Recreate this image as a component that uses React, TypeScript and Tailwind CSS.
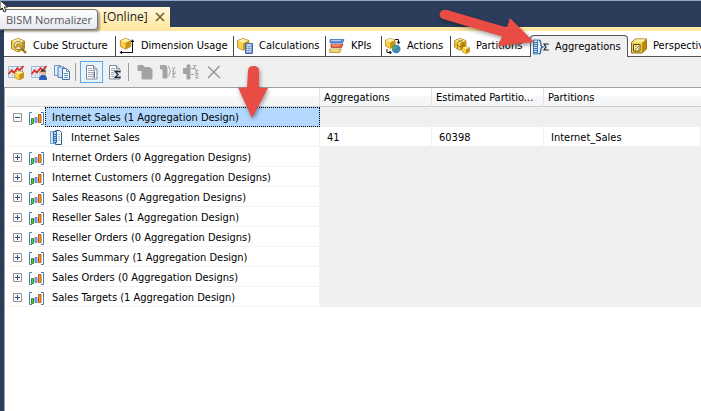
import { ReactNode } from "react";
import clsx from "clsx";

const svgProps = { width: 16, height: 16, viewBox: "0 0 16 16", className: "shrink-0", "aria-hidden": true };

function CubeShape({ x = 0, y = 0, s = 1 }: { x?: number; y?: number; s?: number }) {
  return (
    <g transform={`translate(${x} ${y}) scale(${s})`}>
      <path d="M7 0.5 13.5 3v7.5L7 14 0.5 10.5V3z" fill="#e9b41c" stroke="#8e6a10" strokeWidth="0.8" />
      <path d="M7 0.8 13 3 7 6 1 3z" fill="#fdf0a0" />
      <path d="M1 3.3 7 6v7.5L1 10.3z" fill="#f8d24c" />
      <path d="M13 3.3 7 6v7.5l6-3.2z" fill="#c9930f" />
    </g>
  );
}

function StructureIcon() {
  return (
    <svg {...svgProps}>
      <CubeShape />
      <path d="M10.5 10.5 15 15" stroke="#9b6a10" strokeWidth="2.2" />
      <circle cx="7.3" cy="7.5" r="4.2" fill="#f3ecc8" fillOpacity="0.85" stroke="#8a7a48" />
      <path d="M4.500 9.800 5.500 6.500l2-1.300 2.300 1.500.3 3-2.500-1.700z" fill="#d9a91c" stroke="#8a6508" strokeWidth="0.600" />
    </svg>
  );
}

function DimensionIcon() {
  return (
    <svg {...svgProps}>
      <CubeShape x={1} y={0} s={0.8} />
      <path d="M1 14.5h13M13.5 3v11.5" stroke="#111" fill="none" />
      <path d="M3 12.5.5 14.5 3 16.2zM11.5 4l2-2.7 2 2.7z" fill="#111" />
    </svg>
  );
}

function CalculationsIcon() {
  return (
    <svg {...svgProps}>
      <CubeShape s={0.88} />
      <path d="M8.500 5.500h7v10h-7z" fill="#7d9fd8" stroke="#466aa8" />
      <path d="M10 7h4" stroke="#e4eefc" strokeWidth="1.4" />
      <path d="M10 9.5h4M10 11.5h4M10 13.5h4" stroke="#f3f7ff" strokeDasharray="1 0.6" />
    </svg>
  );
}

function KpiIcon() {
  return (
    <svg {...svgProps}>
      <path d="M1 1.5h14l-1.5 3.5H1z" fill="#5f8fe0" stroke="#3a63ae" strokeWidth="0.7" />
      <path d="M2 6.2h12l-1.5 3.3H2z" fill="#e8603c" stroke="#a63a1e" strokeWidth="0.7" />
      <path d="M0.8 11h11.5l-1.4 3.4H0.8z" fill="#f6d360" stroke="#a8821e" strokeWidth="0.7" />
      <path d="M2 2.5h10M3 7.2h8M2 12h7" stroke="#fff" strokeOpacity="0.55" />
    </svg>
  );
}

function ActionsIcon() {
  return (
    <svg {...svgProps}>
      <CubeShape x={0} y={0} s={0.75} />
      <circle cx="11.2" cy="11" r="4.3" fill="#3c7fcf" />
      <path d="M9 8.5c2-1.4 4 0 3.2 1.6-1 1.4-3.4.6-3 2.9-2.4-1-2.2-3.3-.2-4.500zM13 11.500l2 .5-1.500 2.500z" fill="#57b04a" />
      <path d="M10 1.500h3.500V4M2 11v3.500h3" stroke="#111" fill="none" />
      <path d="M11.500 3.800h4l-2 2.400zM4.500 12.500v4L7 14.500z" fill="#111" />
    </svg>
  );
}

function PartitionsIcon() {
  return (
    <svg {...svgProps}>
      <CubeShape s={0.88} />
      <path d="M3.500 1.800 9 4.500v7M9 1.800 3.500 4.500v7M.8 6.300 6.200 9l5.400-2.700" stroke="#8e6a10" strokeWidth="0.7" fill="none" />
      <CubeShape x={8} y={8} s={0.56} />
    </svg>
  );
}

function AggregationsIcon() {
  return (
    <svg {...svgProps}>
      <path d="M0.500 1h4v14h-4z" fill="#d5e8fa" stroke="#3b76b8" />
      <path d="M1 3.500h3M1 5.500h3M1 7.500h3M1 9.500h3M1 11.500h3M1 13.500h3" stroke="#3b76b8" />
      <path d="M5.500 1c2 0 2.200 1 2.200 3s0 3.500 1.800 4c-1.800.5-1.800 2-1.800 4s-.2 3-2.200 3" stroke="#2f6aac" strokeWidth="1.300" fill="none" />
      <path d="M15 5.800V5h-4l2 3-2 3h4v-.8" stroke="#222" strokeWidth="1.200" fill="none" />
    </svg>
  );
}

function PerspectivesIcon() {
  return (
    <svg {...svgProps}>
      <path d="M.5 4.500 4.500 1h11v10l-4.500 4H.5z" fill="#f5cf43" stroke="#7a5a08" strokeWidth="0.900" />
      <path d="M11 4.500 15.500 1v10L11 15z" fill="#bf890d" />
      <path d="M1 4.500 5 1.300h10L11 4.500z" fill="#fcee9c" />
      <path d="M2.500 6.500h6.500v6.500H2.500z" fill="#fff6c4" stroke="#5f4a10" />
      <path d="M3.500 12 8 8M4 8h1.500M7 11h1" stroke="#8c6a14" />
    </svg>
  );
}

function TrendIcon({ user }: { user?: boolean }) {
  return (
    <svg {...svgProps}>
      <path d="M.5 2.500h14v11H.5z" fill="#e9f1fb" stroke="#9fb7d4" />
      <path d="M1 5.500h13M1 8.500h13M1 11h13M4.500 3v10M8.500 3v10M12 3v10" stroke="#b7cbe4" strokeWidth="0.700" />
      <path d="M.5 10 3.500 6.500 6 8.500 9.500 4l2 2.500L15.500 2" stroke="#e0291f" strokeWidth="1.700" fill="none" />
      {user ? (
        <>
          <path d="M8 16c0-3 1-5 4-5s4 2 4 5z" fill="#2b5fb4" />
          <circle cx="12" cy="8.500" r="2.500" fill="#e8b98c" />
          <path d="M9.300 8.500c0-4 5.400-4 5.400 0-1-1.500-4-1.500-5.400 0z" fill="#3a2a1c" />
        </>
      ) : (
        <CubeShape x={6.500} y={6.500} s={0.680} />
      )}
    </svg>
  );
}

function CopyPagesIcon() {
  return (
    <svg {...svgProps}>
      <path d="M.5 1.500h6v10h-6z" fill="#e4effb" stroke="#6f95c0" />
      <path d="M4 3h6v10.500H4z" fill="#d3e5f8" stroke="#4f7fb6" />
      <path d="M8.500 4.500h4l3 3v8h-7z" fill="#f4f9ff" stroke="#3d6ea8" />
      <path d="M12.500 4.500v3h3M10 9.500h4M10 11.500h4M10 13.500h4" stroke="#6f95c0" fill="none" />
    </svg>
  );
}

function PageIcon({ sigma }: { sigma?: boolean }) {
  return (
    <svg {...svgProps}>
      <path d="M2.500 1.500h7l3.500 3.500v10H2.500z" fill="#fff" stroke="#7b8794" />
      <path d="M9.500 1.500V5H13" stroke="#7b8794" fill="#dfe6ee" />
      <path d="M4 4.500h4M4 6.500h7M4 8.500h5M4 10.500h5M4 12.500h5" stroke="#9aa5b1" />
      {sigma ? (
        <>
          <path d="M7 6.500h7v8H7z" fill="#dbe3ee" />
          <path d="M13 8.500v-1H8.200L11 10.500 8.200 13.500H13v-1" stroke="#1b2433" strokeWidth="1.300" fill="none" />
        </>
      ) : (
        <path d="M9.500 7.500h1.500V14H9.500z" fill="#5d738f" />
      )}
    </svg>
  );
}

function DisabledIcon({ kind }: { kind: "new" | "assign" | "merge" | "delete" }) {
  return (
    <svg {...svgProps} stroke="#a3a3a3" fill="none">
      {kind === "new" && <path d="M1 1.500h5l1 2h6l2 2V15H5V6.500H1z" fill="#a3a3a3" />}
      {kind === "assign" && (
        <>
          <path d="M.5 1.500H6l1 3V14H3V5H.5z" fill="#a3a3a3" />
          <path d="M8 2c1.500 0 1.500 4 2.500 5-1 1-1 5-2.500 5M15.500 4h-3l1.300 2-1.300 2h3M15.500 9.500h-3l1.300 1.500-1.300 2h3" />
        </>
      )}
      {kind === "merge" && (
        <>
          <path d="M4 1h3v14H4zM.5 4.500H4v5H.5z" fill="#a3a3a3" />
          <path d="M8 4.500h3M8 10.500h3M13.500 1.500h-3l1.300 1.500-1.300 2h3M15.500 6.500h-3l1.300 1.500-1.300 1.500h3M15.500 11h-3l1.300 1.500L12.500 14h3" />
        </>
      )}
      {kind === "delete" && <path d="M2 2.500 14 14M13.500 2 2 14" strokeWidth="1.600" stroke="#999" />}
    </svg>
  );
}

function MeasureGroupIcon() {
  return (
    <svg {...svgProps}>
      <path d="M3 3.500H.5v12H3M12 3.500h2.500v12H12" stroke="#4a7db5" fill="none" />
      <path d="M2.500 9.500h2v5h-2z" fill="#4fd04a" stroke="#1f9a24" />
      <path d="M6 8.500h2v5H6z" fill="#a9a5f0" stroke="#7b78cf" />
      <path d="M9.500 5.500H12v8H9.500z" fill="#f0962c" stroke="#b4600f" />
    </svg>
  );
}

function DesignIcon() {
  return (
    <svg width="12" height="16" viewBox="0 0 12 16" className="shrink-0" aria-hidden>
      <path d="M.5 2.500h6v12h-6z" fill="#cfe3f7" stroke="#7ba7d4" />
      <path d="M5.500 1.500h4l2 2v12h-6z" fill="#f5faff" stroke="#35618f" />
      <path d="M3.500 2.500h3v11h-3z" fill="#b5d4f2" stroke="#2f6cab" />
      <path d="M4 5.500h2M4 7.500h2M4 9.500h2M4 11.500h2" stroke="#2f6cab" />
      <path d="M8 5.500h2M8 7.500h2M8 9.500h2M8 11.500h2" stroke="#a9c3de" />
    </svg>
  );
}

interface DesignerTab {
  label: string;
  icon: ReactNode;
  width: string;
  active?: boolean;
}

const tabs: DesignerTab[] = [
  { label: "Cube Structure", icon: <StructureIcon />, width: "w-[108px]" },
  { label: "Dimension Usage", icon: <DimensionIcon />, width: "w-[118px]" },
  { label: "Calculations", icon: <CalculationsIcon />, width: "w-[92px]" },
  { label: "KPIs", icon: <KpiIcon />, width: "w-14" },
  { label: "Actions", icon: <ActionsIcon />, width: "w-[69px]" },
  { label: "Partitions", icon: <PartitionsIcon />, width: "w-[79px]" },
  { label: "Aggregations", icon: <AggregationsIcon />, width: "w-[98px]", active: true },
  { label: "Perspectives", icon: <PerspectivesIcon />, width: "w-[108px]" },
];

interface GridRow {
  name: string;
  child?: boolean;
  expanded?: boolean;
  selected?: boolean;
  values?: string[];
}

const rows: GridRow[] = [
  { name: "Internet Sales (1 Aggregation Design)", expanded: true, selected: true },
  { name: "Internet Sales", child: true, values: ["41", "60398", "Internet_Sales"] },
  { name: "Internet Orders (0 Aggregation Designs)" },
  { name: "Internet Customers (0 Aggregation Designs)" },
  { name: "Sales Reasons (0 Aggregation Designs)" },
  { name: "Reseller Sales (1 Aggregation Design)" },
  { name: "Reseller Orders (0 Aggregation Designs)" },
  { name: "Sales Summary (1 Aggregation Design)" },
  { name: "Sales Orders (0 Aggregation Designs)" },
  { name: "Sales Targets (1 Aggregation Design)" },
];

function TabStrip() {
  return (
    <div className="flex h-[26px] items-end overflow-hidden bg-white">
      <div className="h-full w-1 shrink-0 border-b border-[#555]" />
      {tabs.map((tab, i) => (
        <button
          key={tab.label}
          type="button"
          className={clsx(
            "flex shrink-0 items-center whitespace-nowrap",
            tab.width,
            tab.active
              ? "h-[22px] rounded-t border border-b-0 border-[#555] bg-[#f0f0f0] pl-[2px]"
              : "h-full border-b border-[#555] pt-1 pl-[3px]"
          )}
        >
          {tab.icon}
          <span className="ml-[6px] flex-1 text-left">{tab.label}</span>
          {!tab.active && i < 5 && <span className="h-5 w-px shrink-0 bg-[#444]" />}
        </button>
      ))}
      <div className="h-full flex-1 border-b border-[#555]" />
    </div>
  );
}

function ToolButton({ label, active, disabled, children }: { label: string; active?: boolean; disabled?: boolean; children: ReactNode }) {
  return (
    <button
      type="button"
      aria-label={label}
      disabled={disabled}
      className={clsx(
        "flex h-[22px] w-[23px] items-center justify-center border",
        active ? "border-[#5aa7ea] bg-[#e9f3fb]" : "border-transparent"
      )}
    >
      {children}
    </button>
  );
}

function Toolbar() {
  return (
    <div className="flex h-[30px] items-center bg-[#f0f0f0]">
      <ToolButton label="Design Aggregations"><TrendIcon /></ToolButton>
      <ToolButton label="Usage-Based Optimization"><TrendIcon user /></ToolButton>
      <ToolButton label="Assign Aggregation Design"><CopyPagesIcon /></ToolButton>
      <div className="mr-1 ml-[2px] h-[18px] w-px bg-[#999]" />
      <ToolButton label="Standard View" active><PageIcon /></ToolButton>
      <ToolButton label="Advanced View"><PageIcon sigma /></ToolButton>
      <div className="mr-1 ml-[2px] h-[18px] w-px bg-[#999]" />
      <ToolButton label="New Aggregation Design" disabled><DisabledIcon kind="new" /></ToolButton>
      <ToolButton label="New Aggregation" disabled><DisabledIcon kind="assign" /></ToolButton>
      <ToolButton label="Copy Aggregation" disabled><DisabledIcon kind="merge" /></ToolButton>
      <ToolButton label="Delete" disabled><DisabledIcon kind="delete" /></ToolButton>
    </div>
  );
}

function NameCell({ row }: { row: GridRow }) {
  if (row.child) {
    return (
      <div className="flex h-5 items-center gap-[9px] pl-[43px]">
        <DesignIcon />
        <span className="pt-[2px]">{row.name}</span>
      </div>
    );
  }
  return (
    <div className="flex h-5 items-center">
      <button
        type="button"
        aria-label={row.expanded ? "Collapse" : "Expand"}
        className="mr-[7px] ml-[6px] flex h-[9px] w-[9px] shrink-0 items-center justify-center"
      >
        <svg width="9" height="9" viewBox="0 0 9 9" aria-hidden>
          <path d="M.5.5h8v8h-8z" fill="#fcfcfc" stroke="#929292" />
          <path d={row.expanded ? "M2 4.500h5" : "M2 4.500h5M4.500 2v5"} stroke="#31496f" />
        </svg>
      </button>
      <MeasureGroupIcon />
      <span
        className={clsx(
          "flex h-5 flex-1 items-center border border-dotted pt-[2px] pl-[6px]",
          row.selected ? "border-black bg-[#b3d9ff]" : "border-transparent"
        )}
      >
        {row.name}
      </span>
    </div>
  );
}

function AggregationGrid() {
  return (
    <div className="flex-1 border-t border-l border-[#a0a0a0] bg-white pl-[2px]">
      <table className="w-full table-fixed border-separate border-spacing-0 text-left">
        <colgroup>
          <col className="w-[313px]" />
          <col className="w-28" />
          <col className="w-28" />
          <col />
        </colgroup>
        <thead>
          <tr className="h-[19px]">
            {["", "Aggregations", "Estimated Partitio...", "Partitions"].map((h) => (
              <th
                key={h}
                scope="col"
                className="border-r border-b border-[#e2e3e5] border-b-[#d0d0d0] bg-linear-to-b from-white from-45% to-[#f5f6f7] to-50% p-0 pt-[2px] pl-1 font-normal whitespace-nowrap last:border-r-0"
              >
                {h}
              </th>
            ))}
          </tr>
        </thead>
        <tbody>
          {rows.map((row) => (
            <tr key={row.name} className="h-5">
              <td className="h-5 p-0 whitespace-nowrap shadow-[inset_-1px_-1px_0_#f3f3f3]">
                <NameCell row={row} />
              </td>
              {[0, 1, 2].map((i) => (
                <td
                  key={i}
                  className={clsx("h-5 p-0 pt-[2px] pl-[7px]", row.values ? "shadow-[inset_-1px_-1px_0_#f0f0f0]" : "bg-[#efefef]")}
                >
                  {row.values?.[i]}
                </td>
              ))}
            </tr>
          ))}
        </tbody>
      </table>
    </div>
  );
}

// Red callout arrows drawn over the designer
function Annotations() {
  return (
    <>
      <svg className="pointer-events-none absolute top-[60px] left-[232px] drop-shadow-[1px_2px_2px_#00000066]" width="42" height="62" viewBox="0 0 42 62" aria-hidden>
        <path d="M16 10q0-5 5.500-5t5.500 5v17h9L20 57 6 26.500h9z" fill="#e84c44" />
      </svg>
      <svg className="pointer-events-none absolute top-[4px] left-[434px] drop-shadow-[1px_2px_2px_#00000066]" width="108" height="48" viewBox="0 0 108 48" aria-hidden>
        <path d="M13 5 73 22.500 76 13l24 24-36 4 4-9.500L9 14Q4.500 12 6 8t7-3z" fill="#e84c44" />
      </svg>
    </>
  );
}

export default function App() {
  return (
    <div className="relative flex min-h-screen flex-col overflow-hidden border-t border-[#8ea6c2] bg-[#2c3d5b] pl-1 font-['DejaVu_Sans_Condensed','DejaVu_Sans',sans-serif] text-[11px] leading-4 text-black">
      <header className="border-b-4 border-[#ffe8a3] pt-[6px]">
        <div className="flex h-5 w-[166px] items-center justify-between bg-linear-to-b from-[#fff7dc] to-[#ffe8a3] pr-[5px] pl-[99px] font-['Open_Sans',sans-serif] text-xs text-[#222]">
          <span>[Online]</span>
          <button type="button" aria-label="Close">
            <svg width="10" height="10" viewBox="0 0 10 10" aria-hidden>
              <path d="M1 1l8 8M9 1 1 9" stroke="#756436" strokeWidth="1.700" />
            </svg>
          </button>
        </div>
      </header>
      <TabStrip />
      <Toolbar />
      <AggregationGrid />

      <div
        role="tooltip"
        className="absolute top-2 left-0 flex h-[21px] items-center rounded-r-sm border border-l-0 border-[#767676] bg-linear-to-b from-white to-[#e6e7f0] pr-[5px] pl-[6px] font-['Open_Sans',sans-serif] text-[#575757] shadow-[2px_2px_2px_#00000055]"
      >
        BISM Normalizer
      </div>
      <svg className="absolute top-0 left-0" width="9" height="12" viewBox="0 0 9 12" aria-hidden>
        <path d="M0-1 7.500 6H4.200L6 10 4 11 2.200 7 0 9z" fill="#fff" stroke="#111" strokeWidth="0.900" />
      </svg>
      <Annotations />
    </div>
  );
}
